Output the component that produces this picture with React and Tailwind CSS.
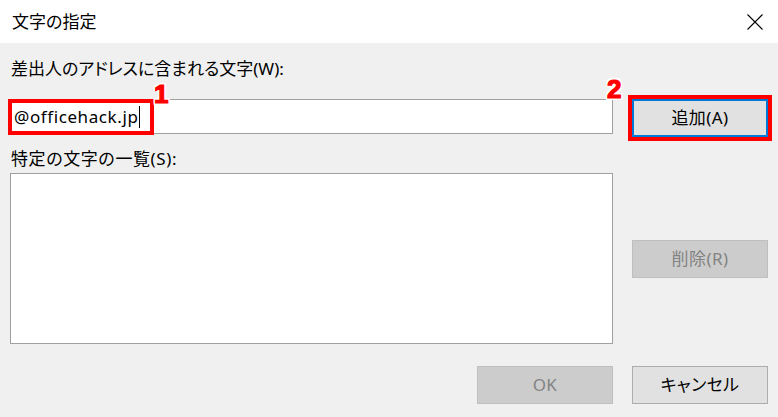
function CloseIcon() {
  return (
    <svg width="16" height="16" viewBox="0 0 16 16" fill="none" stroke="#000" strokeWidth="1.1">
      <path d="M0.5 0.5 L15.5 15.5 M15.5 0.5 L0.5 15.5" />
    </svg>
  );
}

function WinButton({ label, disabled, focused }) {
  return (
    <div
      className={`flex h-[38px] w-[136px] items-center justify-center text-[17px] tracking-[0.4px] ${
        disabled
          ? 'border border-[#bfbfbf] bg-[#cccccc] text-[#838383]'
          : focused
            ? 'border-2 border-[#0078d7] bg-[#e1e1e1] text-black'
            : 'border border-[#adadad] bg-[#e1e1e1] text-black'
      }`}
    >
      {label}
    </div>
  );
}

function StepNumber({ n, className }) {
  return (
    <span
      className={`absolute font-['Liberation_Sans',sans-serif] text-[26px] leading-[20px] font-bold text-[#ff0000] [-webkit-text-stroke:1.2px_#ff0000] [text-shadow:2px_0_0_#fff,-2px_0_0_#fff,0_2px_0_#fff,0_-2px_0_#fff,2px_2px_0_#fff,-2px_-2px_0_#fff,2px_-2px_0_#fff,-2px_2px_0_#fff] ${className}`}
    >
      {n}
    </span>
  );
}

export default function App() {
  return (
    <div className="h-[417px] w-[778px] overflow-hidden bg-[#f0f0f0] font-['Noto_Sans','Noto_Sans_CJK_JP',sans-serif] text-[17px] text-black [font-feature-settings:'palt']">
      <div className="flex h-[43px] items-center justify-between bg-white pl-[12px] pr-[15px]">
        <span className="leading-[24px]">文字の指定</span>
        <CloseIcon />
      </div>

      <div className="flex px-[10px]">
        <div className="flex w-[603px] flex-col">
          <label className="mt-[14px] h-[24px] pl-[1px] leading-[24px]">差出人のアドレスに含まれる文字(W):</label>
          <div className="relative mt-[18px] flex h-[35px] items-center border border-[#a0a0a0] bg-white pl-[3px]">
            <span className="leading-[24px] tracking-[0.6px]">@officehack.jp</span>
            <span className="ml-[1px] h-[22px] w-[1px] bg-black" />
            <div className="absolute left-[-3px] top-[-1px] h-[36px] w-[146px] border-4 border-[#ff0000]" />
            <StepNumber n="1" className="left-[143px] top-[-16px]" />
          </div>
          <label className="mt-[13px] h-[24px] pl-[1px] leading-[24px] tracking-[0.6px]">特定の文字の一覧(S):</label>
          <div className="mt-[2px] h-[171px] border border-[#a0a0a0] bg-white" />
          <div className="mt-[22px] flex justify-end">
            <WinButton label="OK" disabled />
          </div>
        </div>

        <div className="ml-[19px] flex w-[136px] flex-col">
          <div className="relative mt-[56px]">
            <WinButton label="追加(A)" focused />
            <div className="absolute -inset-[4px] border-4 border-[#ff0000]" />
            <StepNumber n="2" className="left-[-25px] top-[-20px]" />
          </div>
          <div className="mt-[103px]">
            <WinButton label="削除(R)" disabled />
          </div>
          <div className="mt-[88px]">
            <WinButton label="キャンセル" />
          </div>
        </div>
      </div>
    </div>
  );
}
